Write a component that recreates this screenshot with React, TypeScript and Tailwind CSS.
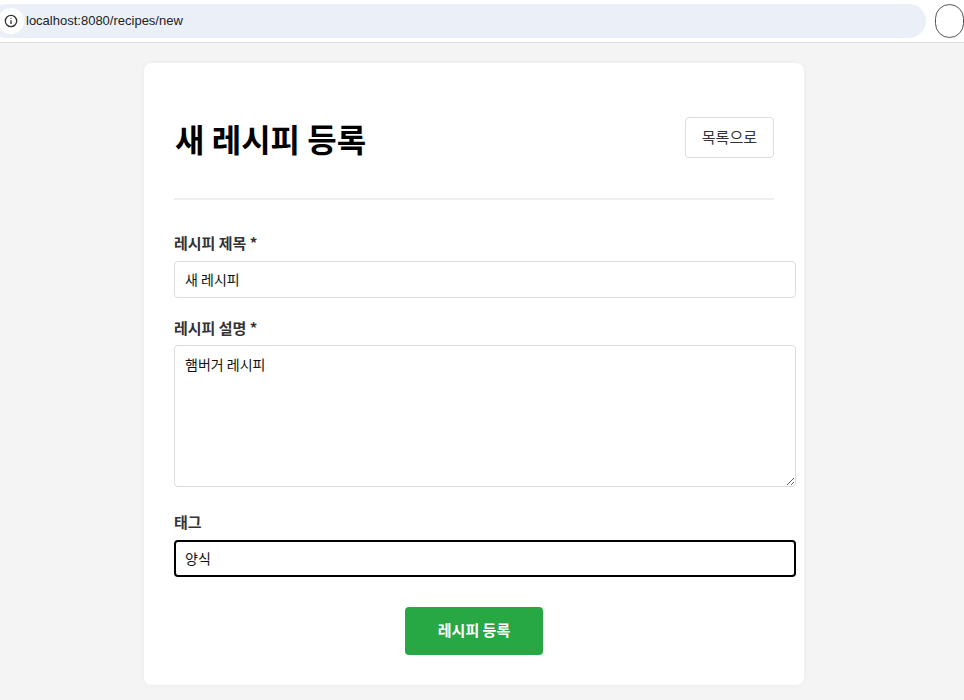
import React from 'react';

const font = { fontFamily: '"Noto Sans CJK KR", "Liberation Sans", sans-serif' };

export default function App() {
  return (
    <div className="min-h-[700px] bg-[#f4f4f4]" style={font}>
      {/* browser bar */}
      <div className="h-[43px] bg-white border-b border-[#dcdcdc] flex items-center">
        <div className="ml-[-10px] h-[34px] w-[955px] rounded-full bg-[#ebf0f8] flex items-center pl-[8px]">
          <div className="w-[26px] h-[26px] rounded-full bg-white flex items-center justify-center">
            <svg width="14" height="14" viewBox="0 0 16 16" fill="none" stroke="#333" strokeWidth="1.5">
              <circle cx="8" cy="8" r="6.5" />
              <path d="M8 7v4.5M8 4.5v1" />
            </svg>
          </div>
          <span className="ml-[2px] text-[13px] text-[#222]" style={{ fontFamily: '"Liberation Sans", sans-serif' }}>
            localhost:8080/recipes/new
          </span>
        </div>
        <div className="ml-[9px] w-[30px] h-[34px] rounded-full border border-[#555]" />
      </div>

      <div className="pt-[20px] pl-[144px]">
        <div className="w-[660px] bg-white rounded-lg px-[30px] pt-[54px] pb-[30px] shadow-[0_0_6px_rgba(0,0,0,0.04)]">
          <div className="flex items-center justify-between pb-[20px] border-b-2 border-[#eee]">
            <h1 className="text-[32px] font-bold text-black leading-none mb-[20px] ml-[1px]">새 레시피 등록</h1>
            <button className="h-[41px] px-[16px] border border-[#ddd] rounded text-[15px] text-[#333] bg-white mb-[20px]">목록으로</button>
          </div>

          <div className="mt-[32px]">
            <label className="block text-[15px] font-bold text-[#333] mb-[6px]">레시피 제목 *</label>
            <input
              defaultValue="새 레시피"
              className="w-[622px] h-[37px] border border-[#ddd] rounded px-[10px] text-[14px] text-[#111] outline-none"
            />
          </div>

          <div className="mt-[19px]">
            <label className="block text-[15px] font-bold text-[#333] mb-[6px]">레시피 설명 *</label>
            <textarea
              defaultValue="햄버거 레시피"
              className="block w-[622px] h-[142px] border border-[#ddd] rounded px-[10px] py-[8px] text-[14px] text-[#111] outline-none"
            />
          </div>

          <div className="mt-[24px]">
            <label className="block text-[15px] font-bold text-[#333] mb-[6px]">태그</label>
            <input
              defaultValue="양식"
              className="w-[622px] h-[37px] border-2 border-black rounded px-[9px] text-[14px] text-[#111] outline-none"
            />
          </div>

          <div className="flex justify-center mt-[30px]">
            <button className="w-[138px] h-[48px] bg-[#28a745] text-white font-bold text-[15px] rounded">레시피 등록</button>
          </div>
        </div>
      </div>
    </div>
  );
}
